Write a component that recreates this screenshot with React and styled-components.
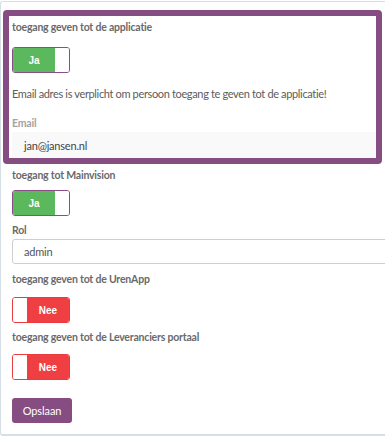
import React from 'react'
import styled, { createGlobalStyle } from 'styled-components'

const GlobalStyle = createGlobalStyle`
    html, body {
        margin: 0;
        padding: 0;
        background: #ffffff;
        overflow: hidden;
    }
    body {
        font-family: Lato, "Open Sans", sans-serif;
        color: #5a5a5a;
    }
`

function Toggle({ on }) {
    return (
        <ToggleStyled on={on ? 1 : 0}>
            {on ? (
                <>
                    <span className="label">Ja</span>
                    <span className="knob" />
                </>
            ) : (
                <>
                    <span className="knob" />
                    <span className="label">Nee</span>
                </>
            )}
        </ToggleStyled>
    )
}

function App() {
    return (
        <>
            <GlobalStyle />
            <Card>
                <Highlight>
                    <Label $top={4}>toegang geven tot de applicatie</Label>
                    <Field $top={13}>
                        <Toggle on />
                    </Field>
                    <Notice>Email adres is verplicht om persoon toegang te geven tot de applicatie!</Notice>
                    <Label $muted $top={15}>Email</Label>
                    <EmailInput>jan@jansen.nl</EmailInput>
                </Highlight>

                <Section>
                    <Label $top={4}>toegang tot Mainvision</Label>
                    <Field $top={8}>
                        <Toggle on />
                    </Field>
                    <Label $top={7}>Rol</Label>
                    <SelectBox>admin</SelectBox>
                    <Label $top={8}>toegang geven tot de UrenApp</Label>
                    <Field $top={11}>
                        <Toggle />
                    </Field>
                    <Label $top={7}>toegang geven tot de Leveranciers portaal</Label>
                    <Field $top={10}>
                        <Toggle />
                    </Field>
                    <SaveButton>Opslaan</SaveButton>
                </Section>
            </Card>
        </>
    )
}

export default App

const Card = styled.div`
    box-sizing: border-box;
    width: 400px;
    margin-top: 1px;
    padding: 8px 0 11px 2px;
    border: 1px solid #d6dee6;
    border-bottom-width: 2px;
    border-right: none;
    border-radius: 3px 0 0 3px;
    background: #ffffff;
`

const Highlight = styled.div`
    box-sizing: border-box;
    width: 379px;
    padding: 0 0 0 3px;
    border: 6px solid #864d82;
    border-radius: 4px;
`

const Section = styled.div`
    padding-left: 9px;
`

const Label = styled.div`
    margin-top: ${p => p.$top || 0}px;
    font-size: 10.5px;
    line-height: 14px;
    font-weight: 700;
    letter-spacing: -0.2px;
    color: ${p => (p.$muted ? '#a3a3a3' : '#6a6a6a')};
`

const Field = styled.div`
    margin-top: ${p => p.$top || 0}px;
`

const Notice = styled.div`
    margin-top: 14px;
    font-size: 11px;
    line-height: 14px;
    letter-spacing: -0.35px;
    color: #5c5c5c;
`

const EmailInput = styled.div`
    margin-top: 2px;
    height: 26px;
    padding-left: 12px;
    display: flex;
    align-items: center;
    background: #f9f9f9;
    font-size: 11px;
    letter-spacing: -0.2px;
    color: #444444;
`

const SelectBox = styled.div`
    box-sizing: border-box;
    margin-top: 2px;
    height: 25px;
    padding-left: 11px;
    display: flex;
    align-items: center;
    border: 1px solid #cfcfcf;
    border-radius: 3px;
    font-size: 11px;
    letter-spacing: -0.2px;
    color: #555555;
`

const ToggleStyled = styled.div`
    box-sizing: border-box;
    width: 58px;
    height: 26px;
    display: flex;
    border: 1px solid ${p => (p.on ? '#8a4d86' : '#ec3b3f')};
    border-radius: 3px;
    overflow: hidden;

    .label {
        flex: 1;
        display: flex;
        align-items: center;
        justify-content: center;
        background: ${p => (p.on ? '#5cb85c' : '#ef3f43')};
        color: #ffffff;
        font-family: "Liberation Sans", Arial, sans-serif;
        font-size: 10px;
        font-weight: 700;
    }

    .knob {
        width: 14px;
        background: #ffffff;
    }
`

const SaveButton = styled.button`
    margin-top: 18px;
    width: 60px;
    height: 25px;
    padding: 0;
    border: none;
    border-radius: 3px;
    background: #864d82;
    color: #ffffff;
    font-family: Lato, "Open Sans", sans-serif;
    font-size: 11px;
    letter-spacing: -0.1px;
`
